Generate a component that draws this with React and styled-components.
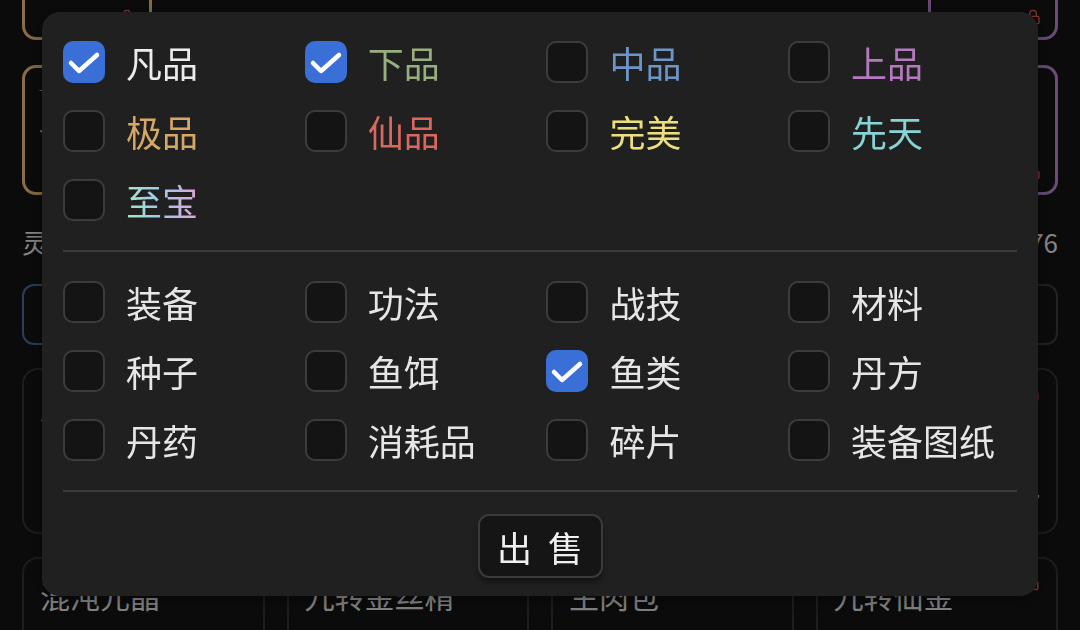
import { createGlobalStyle, styled, css } from "styled-components";
import { Lock } from "lucide-react";

const GlobalStyle = createGlobalStyle`
  html, body {
    margin: 0;
    padding: 0;
    background: #121212;
    overflow: hidden;
  }
  body {
    font-family: "Noto Sans CJK SC", "Noto Sans", sans-serif;
    color: #e6e6e6;
  }
  * { box-sizing: border-box; }
`;

/* ---------- inventory page behind the dialog ---------- */

const Page = styled.div`
  width: 1080px;
  height: 630px;
  overflow: hidden;
  padding: 0 22px;
`;

const Scroller = styled.div`
  margin-top: -90px;
  display: flex;
  flex-direction: column;
`;

const Equipment = styled.div`
  display: flex;
  justify-content: space-between;
  gap: 24px;
`;

const SlotColumn = styled.div`
  width: 130px;
  display: flex;
  flex-direction: column;
  gap: 25px;
`;

const Portrait = styled.div`
  flex: 1;
`;

const Slot = styled.div`
  height: 130px;
  border: 3px solid ${(p) => p.$color};
  border-radius: 14px;
  padding: 12px 14px;
  display: flex;
  flex-direction: column;
  justify-content: space-between;
  font-size: 22px;
  color: #bdbdbd;
`;

const SlotLevel = styled.span`
  font-size: 14px;
  height: 16px;
  color: #4fae6a;
`;

const SlotFoot = styled.div`
  display: flex;
  justify-content: flex-end;
  color: #d4524a;
`;

const Stats = styled.div`
  margin-top: 30px;
  height: 32px;
  display: flex;
  justify-content: space-between;
  align-items: center;
  font-size: 26px;
  color: #d2d2d2;
`;

const FourGrid = styled.div`
  margin-top: ${(p) => p.$top}px;
  display: grid;
  grid-template-columns: repeat(4, 1fr);
  gap: 22px;
`;

const Tab = styled.div`
  height: 61px;
  border: 2px solid ${(p) => (p.$active ? "#41618f" : "#353535")};
  border-radius: 12px;
  display: flex;
  align-items: center;
  justify-content: center;
  font-size: 24px;
  color: #cfcfcf;
`;

const ItemCard = styled.div`
  height: 166px;
  border: 2px solid #2e2e2e;
  border-radius: 16px;
  padding: 14px 16px;
  display: flex;
  flex-direction: column;
  justify-content: space-between;
`;

const ItemHead = styled.div`
  display: flex;
  justify-content: space-between;
  align-items: flex-start;
  font-size: 30px;
  color: #cfcfcf;
  svg { color: #d4524a; }
`;

const ItemCount = styled.div`
  text-align: right;
  font-size: 24px;
  font-family: "Liberation Sans", sans-serif;
  color: #cfcfcf;
`;

/* ---------- dialog ---------- */

const Backdrop = styled.div`
  position: fixed;
  inset: 0;
  background: rgba(0, 0, 0, 0.35);
  display: flex;
  justify-content: center;
  align-items: flex-start;
  padding-top: 12px;
`;

const Dialog = styled.div`
  width: 996px;
  background: #202020;
  border-radius: 18px;
  padding: 0 21px;
  box-shadow: 0 4px 20px rgba(0, 0, 0, 0.4);
`;

const Section = styled.div`
  padding: 29px 0;
  display: grid;
  grid-template-columns: repeat(4, 241.7px);
  row-gap: 27px;
`;

const Divider = styled.div`
  height: 2px;
  background: #3a3a3a;
`;

const Option = styled.label`
  display: flex;
  align-items: center;
  height: 42px;
  gap: 21px;
  cursor: pointer;
`;

const Box = styled.span`
  width: 42px;
  height: 42px;
  flex: none;
  border-radius: 10px;
  display: flex;
  align-items: center;
  justify-content: center;
  ${(p) =>
    p.$checked
      ? css`
          background: #3a6fd8;
          border: none;
        `
      : css`
          background: #141414;
          border: 2px solid #3c3c3c;
        `}
`;

const Label = styled.span`
  font-size: 36px;
  line-height: 1;
  color: ${(p) => p.$color || "#e6e6e6"};
  ${(p) =>
    p.$rainbow &&
    css`
      background: linear-gradient(90deg, #a9e4c2 0%, #9fc9ec 45%, #e0a6d9 100%);
      -webkit-background-clip: text;
      background-clip: text;
      color: transparent;
    `}
`;

const Footer = styled.div`
  padding: 22px 0 18px;
  display: flex;
  justify-content: center;
`;

const SellButton = styled.button`
  width: 125px;
  height: 64px;
  border-radius: 11px;
  background: #151515;
  border: 2px solid #3a3a3a;
  box-shadow: 0 5px 5px rgba(0, 0, 0, 0.35);
  color: #f0f0f0;
  font-family: "Noto Sans CJK SC", sans-serif;
  font-size: 35px;
  letter-spacing: 16px;
  text-indent: 16px;
  display: flex;
  align-items: center;
  justify-content: center;
  padding: 0;
`;

const Check = () => (
  <svg width="42" height="42" viewBox="0 0 42 42">
    <path
      d="M8 22 L16 30 L34 14"
      fill="none"
      stroke="#fff"
      strokeWidth="4.5"
      strokeLinecap="round"
      strokeLinejoin="round"
    />
  </svg>
);

const qualities = [
  { label: "凡品", color: "#ececec", checked: true },
  { label: "下品", color: "#97ae80", checked: true },
  { label: "中品", color: "#6e95c8" },
  { label: "上品", color: "#b579bf" },
  { label: "极品", color: "#d5a866" },
  { label: "仙品", color: "#da685f" },
  { label: "完美", color: "#ece07e" },
  { label: "先天", color: "#88d3d3" },
  { label: "至宝", rainbow: true },
];

const categories = [
  { label: "装备" },
  { label: "功法" },
  { label: "战技" },
  { label: "材料" },
  { label: "种子" },
  { label: "鱼饵" },
  { label: "鱼类", checked: true },
  { label: "丹方" },
  { label: "丹药" },
  { label: "消耗品" },
  { label: "碎片" },
  { label: "装备图纸" },
];

const leftSlots = [
  { color: "#d4a96d" },
  { color: "#d4a96d", level: "+3", name: "七星" },
];
const rightSlots = [{ color: "#a476b9" }, { color: "#a476b9" }];
const tabs = ["全部", "装备", "材料", "丹药"];

const EquipSlot = ({ slot }) => (
  <Slot $color={slot.color}>
    <SlotLevel>{slot.level}</SlotLevel>
    <span>{slot.name}</span>
    <SlotFoot>
      <Lock size={16} />
    </SlotFoot>
  </Slot>
);

const CheckOption = ({ item }) => (
  <Option>
    <Box $checked={item.checked}>{item.checked && <Check />}</Box>
    <Label $color={item.color} $rainbow={item.rainbow}>
      {item.label}
    </Label>
  </Option>
);

const App = () => {
  return (
    <>
      <GlobalStyle />
      <Page>
        <Scroller>
          <Equipment>
            <SlotColumn>
              {leftSlots.map((s, i) => (
                <EquipSlot key={i} slot={s} />
              ))}
            </SlotColumn>
            <Portrait />
            <SlotColumn>
              {rightSlots.map((s, i) => (
                <EquipSlot key={i} slot={s} />
              ))}
            </SlotColumn>
          </Equipment>
          <Stats>
            <span>灵石</span>
            <span>176/176</span>
          </Stats>
          <FourGrid $top={27}>
            {tabs.map((t, i) => (
              <Tab key={t} $active={i === 0}>
                {t}
              </Tab>
            ))}
          </FourGrid>
          <FourGrid $top={23}>
            {["凡铁", "灵草", "鱼干", "玄铁"].map((n) => (
              <ItemCard key={n}>
                <ItemHead>
                  <span>{n}</span>
                  <Lock size={18} />
                </ItemHead>
                <ItemCount>7</ItemCount>
              </ItemCard>
            ))}
          </FourGrid>
          <FourGrid $top={23}>
            {["混沌元晶", "九转金丝精", "生肉包", "九转仙金"].map((n) => (
              <ItemCard key={n}>
                <ItemHead>
                  <span>{n}</span>
                  <Lock size={18} />
                </ItemHead>
              </ItemCard>
            ))}
          </FourGrid>
        </Scroller>
      </Page>

      <Backdrop>
        <Dialog>
          <Section>
            {qualities.map((q) => (
              <CheckOption key={q.label} item={q} />
            ))}
          </Section>
          <Divider />
          <Section>
            {categories.map((c) => (
              <CheckOption key={c.label} item={c} />
            ))}
          </Section>
          <Divider />
          <Footer>
            <SellButton>出售</SellButton>
          </Footer>
        </Dialog>
      </Backdrop>
    </>
  );
};

export default App;
